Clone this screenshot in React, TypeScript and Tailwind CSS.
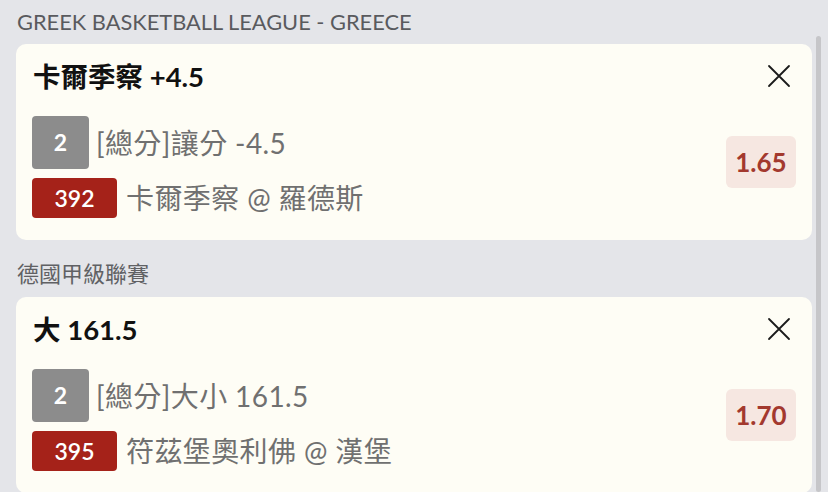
import React from "react"

const FONT = "font-['Lato','Noto_Sans_CJK_TC',sans-serif]"

type Bet = {
  league: string
  pick: string
  seq: string
  market: string
  code: string
  match: string
  odds: string
}

const BETS: Bet[] = [
  { league: "GREEK BASKETBALL LEAGUE - GREECE", pick: "卡爾季察 +4.5", seq: "2", market: "[總分]讓分 -4.5", code: "392", match: "卡爾季察 @ 羅德斯", odds: "1.65" },
  { league: "德國甲級聯賽", pick: "大 161.5", seq: "2", market: "[總分]大小 161.5", code: "395", match: "符茲堡奧利佛 @ 漢堡", odds: "1.70" },
]

function CloseIcon() {
  return (
    <svg viewBox="0 0 24 24" className="h-6 w-6" fill="none" stroke="#1a1a1a" strokeWidth="1.8" strokeLinecap="round">
      <path d="M2 2l20 20M22 2L2 22" />
    </svg>
  )
}

function BetCard({ b }: { b: Bet }) {
  return (
    <div className="rounded-[10px] bg-[#fefdf5] pb-[22px] pl-[16px] pr-[16px] pt-[17px]">
      {/* pick + close */}
      <div className="flex items-start justify-between pl-[1px] pr-[5px]">
        <div className="text-[27.5px] font-bold leading-[32px] text-[#111]">{b.pick}</div>
        <button className="mt-[3px]" aria-label="remove"><CloseIcon /></button>
      </div>

      {/* market rows + odds */}
      <div className="mt-[23px] flex items-start justify-between">
        <div className="flex flex-col gap-[9px]">
          <div className="flex items-center">
            <span className="flex h-[53px] w-[57px] items-center justify-center rounded-[4px] bg-[#8c8c8c] text-[23px] font-bold text-white">{b.seq}</span>
            <span className="ml-[7px] text-[28px] leading-[32px] tracking-[0.4px] text-[#707070]">{b.market}</span>
          </div>
          <div className="flex items-center">
            <span className="flex h-[40px] w-[85px] items-center justify-center rounded-[4px] bg-[#a52219] text-[23px] font-semibold text-white">{b.code}</span>
            <span className="ml-[9px] text-[28px] leading-[32px] tracking-[0.4px] text-[#707070]">{b.match}</span>
          </div>
        </div>
        <div className="mt-[20px] flex h-[52px] w-[70px] items-center justify-center rounded-[6px] bg-[#f6e7e1] text-[26px] font-bold text-[#a3392e]">{b.odds}</div>
      </div>
    </div>
  )
}

export default function App() {
  return (
    <div className={`relative h-[492px] w-full overflow-hidden bg-[#e4e5e9] pl-[16px] pr-[16px] ${FONT}`}>
      <div className="pt-[8px] pl-[1px] text-[21.8px] leading-[28px] text-[#595a5e]">{BETS[0].league}</div>
      <div className="mt-[8px]"><BetCard b={BETS[0]} /></div>

      <div className="mt-[20px] pl-[1px] text-[22px] leading-[28px] text-[#606164]">{BETS[1].league}</div>
      <div className="mt-[9px]"><BetCard b={BETS[1]} /></div>

      {/* scrollbar */}
      <div className="absolute bottom-0 right-[7px] top-[36px] w-[5px] rounded-full bg-[#c6c6c9]" />
    </div>
  )
}
